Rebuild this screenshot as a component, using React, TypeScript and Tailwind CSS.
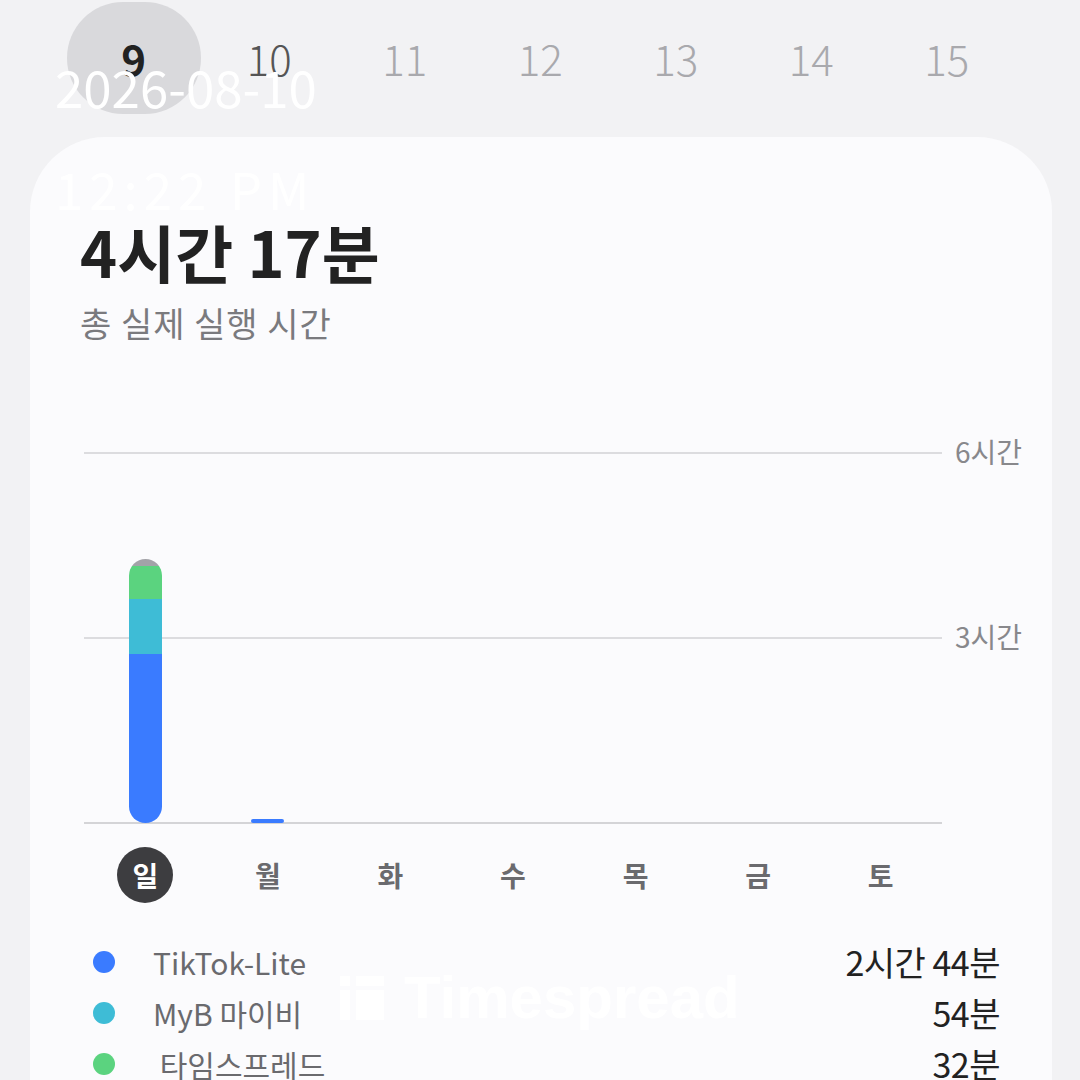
import React from 'react'

const DATES = [9, 10, 11, 12, 13, 14, 15]
const DAYS = ['일', '월', '화', '수', '목', '금', '토']

// minutes per day, stacked bottom → top
const BARS: { color: string; min: number }[][] = [
  [
    { color: 'bg-[#3a7bff]', min: 164 },
    { color: 'bg-[#3ebcd6]', min: 54 },
    { color: 'bg-[#5bd37f]', min: 32 },
    { color: 'bg-[#a3a3a8]', min: 7 },
  ],
  [{ color: 'bg-[#3a7bff]', min: 4 }],
  [], [], [], [], [],
]

const APPS = [
  { name: 'TikTok-Lite', dot: 'bg-[#3a7bff]', time: '2시간 44분' },
  { name: 'MyB 마이비', dot: 'bg-[#3ebcd6]', time: '54분' },
  { name: '\u00a0타임스프레드', dot: 'bg-[#5bd37f]', time: '32분' },
]

const PX_PER_MIN = 185 / 180

export default function App() {
  return (
    <div
      className="relative w-[1080px] h-[1080px] overflow-hidden bg-[#f2f2f4]"
      style={{ fontFamily: '"Noto Sans CJK KR", "Noto Sans", sans-serif' }}
    >
      {/* date strip */}
      <div className="flex h-[137px] pl-[66px]">
        {DATES.map((d, i) => (
          <div key={d} className="relative w-[135.5px] flex justify-center">
            {i === 0 && (
              <div className="absolute top-[2px] w-[134px] h-[112px] rounded-full bg-[#d9d9dc]" />
            )}
            <span
              className={`relative mt-[32px] text-[42px] leading-[52px] ${
                i === 0 ? 'text-[#222] font-semibold' : i === 1 ? 'text-[#555] font-light' : 'text-[#a9a9ad] font-light'
              }`}
            >
              {d}
            </span>
          </div>
        ))}
      </div>

      {/* card */}
      <div className="ml-[30px] w-[1022px] h-[1000px] rounded-t-[75px] bg-[#fbfbfd] pt-[75px]">
        <h1 className="pl-[50px] text-[63px] font-bold leading-[78px] text-[#222]">4시간 17분</h1>
        <p className="pl-[50px] mt-[10px] text-[34px] leading-[46px] text-[#7a7a7e] tracking-[1px]">총 실제 실행 시간</p>

        {/* chart */}
        <div className="relative ml-[54px] mt-[106px] w-[858px] h-[372px]">
          <div className="absolute inset-x-0 top-0 h-[2px] bg-[#dcdcdf]" />
          <div className="absolute inset-x-0 top-[185px] h-[2px] bg-[#dcdcdf]" />
          <div className="absolute inset-x-0 top-[370px] h-[2px] bg-[#d4d4d7]" />
          <span className="absolute left-[871px] top-[-20px] whitespace-nowrap text-[28px] leading-[38px] text-[#88888c]">6시간</span>
          <span className="absolute left-[871px] top-[165px] whitespace-nowrap text-[28px] leading-[38px] text-[#88888c]">3시간</span>
          <div className="absolute inset-x-0 top-0 h-[371px] grid grid-cols-7 items-end">
            {BARS.map((segs, i) => (
              <div key={i} className="flex justify-center">
                {segs.length > 0 && (
                  <div className={`flex flex-col-reverse overflow-hidden w-[33px] ${segs.length > 1 ? 'rounded-full' : 'rounded-[3px]'}`}>
                    {segs.map((s, j) => (
                      <div key={j} className={s.color} style={{ height: Math.round(s.min * PX_PER_MIN) }} />
                    ))}
                  </div>
                )}
              </div>
            ))}
          </div>
        </div>

        {/* weekdays */}
        <div className="ml-[54px] mt-[23px] w-[858px] grid grid-cols-7">
          {DAYS.map((d, i) => (
            <div key={d} className="flex justify-center">
              <div
                className={`w-[56px] h-[56px] rounded-full flex items-center justify-center text-[28px] font-bold ${
                  i === 0 ? 'bg-[#3d3d40] text-white' : 'text-[#6a6a6e]'
                }`}
              >
                {d}
              </div>
            </div>
          ))}
        </div>

        {/* legend */}
        <div className="relative mt-[33px] pl-[63px] pr-[52px] flex flex-col">
          {APPS.map(a => (
            <div key={a.name} className="flex items-center h-[51px]">
              <span className={`w-[22px] h-[22px] rounded-full ${a.dot}`} />
              <span className="ml-[38px] flex-1 text-[30px] text-[#6a6a6e] leading-[40px]">{a.name}</span>
              <span className="text-[34px] text-[#222] leading-[40px] tracking-[-0.5px]">{a.time}</span>
            </div>
          ))}
          {/* watermark */}
          <div className="absolute left-[310px] top-[32px] flex items-center gap-[20px] text-white">
            <svg width="44" height="44" viewBox="0 0 44 44" fill="currentColor">
              <rect x="0" y="0" width="10" height="10" />
              <rect x="0" y="14" width="10" height="30" />
              <rect x="16" y="0" width="28" height="10" />
              <rect x="16" y="14" width="28" height="30" />
            </svg>
            <span className="text-[60px] font-bold leading-[60px]" style={{ fontFamily: '"Liberation Sans", Arial, sans-serif' }}>Timespread</span>
          </div>
        </div>
      </div>

      {/* screenshot overlays */}
      <span className="absolute left-[55px] top-[56px] text-[51px] leading-[60px] text-white">2026-08-10</span>
      <span className="absolute left-[55px] top-[158px] text-[51px] leading-[60px] tracking-[6px] text-white">12:22 PM</span>
    </div>
  )
}
